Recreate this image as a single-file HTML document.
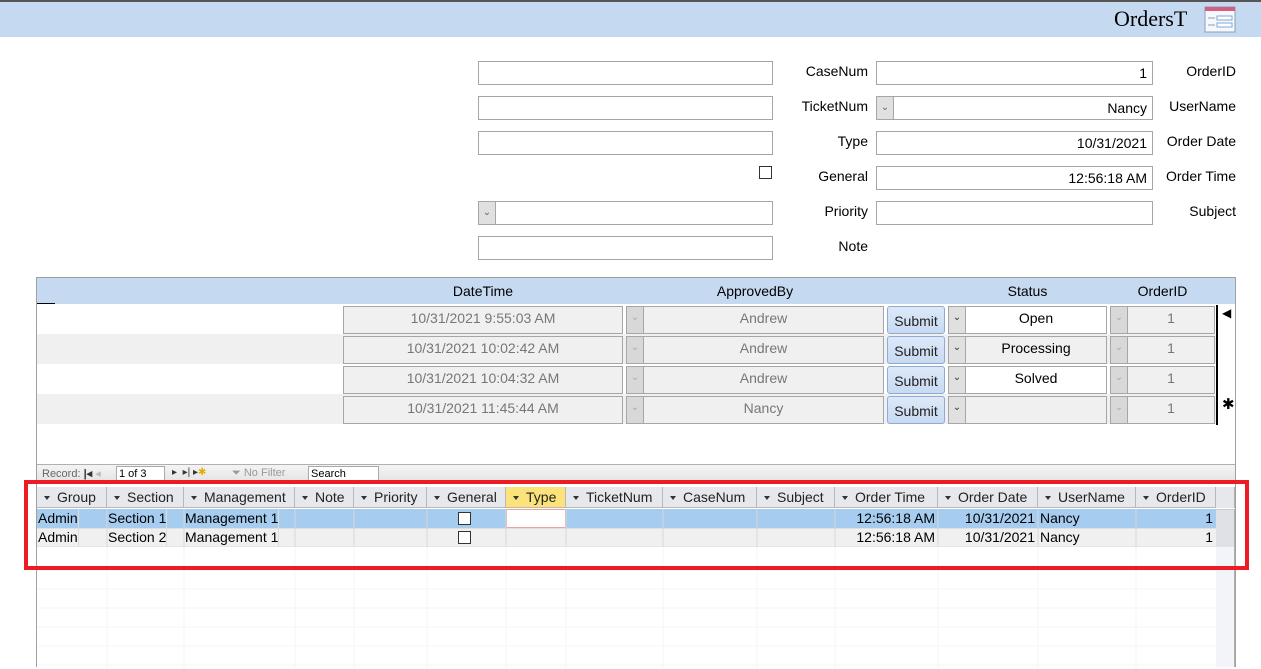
<!DOCTYPE html>
<html><head><meta charset="utf-8">
<style>
*{box-sizing:border-box;margin:0;padding:0}
body{width:1261px;height:662px;position:relative;overflow:hidden;background:#fff;font-family:"Liberation Sans",sans-serif;font-size:14px;color:#000}
.a{position:absolute}
.box{position:absolute;border:1px solid #a6a6a6;background:#fff;height:24px}
.lbl{position:absolute;font-size:14px;line-height:20px}
.dd{position:absolute;left:0;top:0;width:17px;height:100%;background:#e0e0e0;border-right:1px solid #a6a6a6;font-size:10px;color:#666;text-align:center;line-height:22px}
.gbox{position:absolute;border:1px solid #a6a6a6;background:#f0f0f0;height:28px;color:#777;text-align:center;line-height:22px;font-size:14px}
.sub{position:absolute;border:1px solid #8eaad6;border-radius:3px;background:linear-gradient(#dde9f8,#c7daf2);width:58px;height:28px;text-align:center;line-height:28px;font-size:14px;color:#222}
.hc{position:absolute;top:0;height:20px;line-height:20px;border-right:1px solid #b8b8b8;font-size:14px;color:#222;padding-left:20px;background:#e6e8ec}
.hc:before{content:"";position:absolute;left:7px;top:9px;border:3px solid transparent;border-top:4px solid #333}
.c{position:absolute;height:19px;line-height:19px;border-right:1px solid #ddd;font-size:14px;white-space:nowrap;overflow:hidden}
.cb{position:absolute;width:13px;height:13px;border:1px solid #333;background:#fff}
</style></head><body>
<div class="a" style="left:0;top:0;width:1261px;height:37px;background:#c5d9f1;border-top:2px solid #555"></div>
<div class="a" style="left:1114px;top:6px;font-family:'Liberation Serif',serif;font-size:22px">OrdersT</div>
<svg class="a" style="left:1204px;top:6px" width="33" height="28" viewBox="0 0 33 28">
<rect x="1" y="1" width="30" height="25" fill="#f6f8fb" stroke="#8aa0bb"/>
<rect x="1" y="1" width="30" height="4" fill="#d06080"/>
<line x1="4" y1="12" x2="11" y2="12" stroke="#8aa0bb"/><rect x="13" y="10" width="15" height="4" fill="#fff" stroke="#7fa7d8"/>
<line x1="4" y1="19" x2="11" y2="19" stroke="#8aa0bb"/><rect x="13" y="17" width="15" height="4" fill="#fff" stroke="#7fa7d8"/>
</svg>

<div class="box" style="left:478px;top:61px;width:295px"></div>
<div class="box" style="left:478px;top:96px;width:295px"></div>
<div class="box" style="left:478px;top:131px;width:295px"></div>
<div class="a" style="left:759px;top:166px;width:13px;height:13px;border:1px solid #333"></div>
<div class="box" style="left:478px;top:201px;width:295px"><div class="dd">&#8964;</div></div>
<div class="box" style="left:478px;top:236px;width:295px"></div>

<div class="lbl" style="left:780px;top:61px;width:88px;text-align:right">CaseNum</div>
<div class="lbl" style="left:780px;top:96px;width:88px;text-align:right">TicketNum</div>
<div class="lbl" style="left:780px;top:131px;width:88px;text-align:right">Type</div>
<div class="lbl" style="left:780px;top:166px;width:88px;text-align:right">General</div>
<div class="lbl" style="left:780px;top:201px;width:88px;text-align:right">Priority</div>
<div class="lbl" style="left:780px;top:236px;width:88px;text-align:right">Note</div>

<div class="box" style="left:876px;top:61px;width:277px;text-align:right;padding-right:5px;line-height:22px">1</div>
<div class="box" style="left:876px;top:96px;width:277px;text-align:right;padding-right:5px;line-height:22px"><div class="dd">&#8964;</div>Nancy</div>
<div class="box" style="left:876px;top:131px;width:277px;text-align:right;padding-right:5px;line-height:22px">10/31/2021</div>
<div class="box" style="left:876px;top:166px;width:277px;text-align:right;padding-right:5px;line-height:22px">12:56:18 AM</div>
<div class="box" style="left:876px;top:201px;width:277px"></div>

<div class="lbl" style="left:1150px;top:61px;width:86px;text-align:right">OrderID</div>
<div class="lbl" style="left:1150px;top:96px;width:86px;text-align:right">UserName</div>
<div class="lbl" style="left:1150px;top:131px;width:86px;text-align:right">Order Date</div>
<div class="lbl" style="left:1150px;top:166px;width:86px;text-align:right">Order Time</div>
<div class="lbl" style="left:1150px;top:201px;width:86px;text-align:right">Subject</div>

<div class="a" style="left:36px;top:277px;width:1200px;height:390px;border:1px solid #a0a0a0;border-bottom:none"></div>
<div class="a" style="left:37px;top:278px;width:1198px;height:26px;background:#c5d9f1"></div>
<div class="a" style="left:37px;top:303px;width:18px;height:1px;background:#000"></div>
<div class="lbl" style="left:343px;top:281px;width:280px;text-align:center">DateTime</div>
<div class="lbl" style="left:626px;top:281px;width:258px;text-align:center">ApprovedBy</div>
<div class="lbl" style="left:948px;top:281px;width:159px;text-align:center">Status</div>
<div class="lbl" style="left:1110px;top:281px;width:105px;text-align:center">OrderID</div>
<div class="a" style="left:37px;top:334px;width:1180px;height:30px;background:#f0f0f0"></div>
<div class="a" style="left:37px;top:394px;width:1180px;height:30px;background:#f0f0f0"></div>
<div class="a" style="left:1216px;top:305px;width:2px;height:120px;background:#000"></div>
<div class="a" style="left:1222px;top:306px;font-size:12px">&#9664;</div>
<div class="a" style="left:1222px;top:395px;font-size:15px">&#10033;</div>

<div class="gbox" style="left:343px;top:306px;width:280px">10/31/2021 9:55:03 AM</div>
<div class="gbox" style="left:343px;top:336px;width:280px">10/31/2021 10:02:42 AM</div>
<div class="gbox" style="left:343px;top:366px;width:280px">10/31/2021 10:04:32 AM</div>
<div class="gbox" style="left:343px;top:396px;width:280px">10/31/2021 11:45:44 AM</div>

<div class="gbox" style="left:626px;top:306px;width:258px;padding-left:17px"><div class="dd" style="background:#d8d8d8;color:#aaa;height:26px">&#8964;</div>Andrew</div>
<div class="gbox" style="left:626px;top:336px;width:258px;padding-left:17px"><div class="dd" style="background:#d8d8d8;color:#aaa;height:26px">&#8964;</div>Andrew</div>
<div class="gbox" style="left:626px;top:366px;width:258px;padding-left:17px"><div class="dd" style="background:#d8d8d8;color:#aaa;height:26px">&#8964;</div>Andrew</div>
<div class="gbox" style="left:626px;top:396px;width:258px;padding-left:17px"><div class="dd" style="background:#d8d8d8;color:#aaa;height:26px">&#8964;</div>Nancy</div>

<div class="sub" style="left:887px;top:306px">Submit</div>
<div class="sub" style="left:887px;top:336px">Submit</div>
<div class="sub" style="left:887px;top:366px">Submit</div>
<div class="sub" style="left:887px;top:396px">Submit</div>

<div class="gbox" style="left:948px;top:306px;width:159px;padding-left:17px;background:#fff;color:#000"><div class="dd" style="height:26px;color:#333">&#8964;</div>Open</div>
<div class="gbox" style="left:948px;top:336px;width:159px;padding-left:17px;color:#000"><div class="dd" style="height:26px;color:#333">&#8964;</div>Processing</div>
<div class="gbox" style="left:948px;top:366px;width:159px;padding-left:17px;background:#fff;color:#000"><div class="dd" style="height:26px;color:#333">&#8964;</div>Solved</div>
<div class="gbox" style="left:948px;top:396px;width:159px;padding-left:17px"><div class="dd" style="height:26px;color:#333">&#8964;</div></div>

<div class="gbox" style="left:1110px;top:306px;width:105px;padding-left:17px"><div class="dd" style="background:#d8d8d8;color:#aaa;height:26px">&#8964;</div>1</div>
<div class="gbox" style="left:1110px;top:336px;width:105px;padding-left:17px"><div class="dd" style="background:#d8d8d8;color:#aaa;height:26px">&#8964;</div>1</div>
<div class="gbox" style="left:1110px;top:366px;width:105px;padding-left:17px"><div class="dd" style="background:#d8d8d8;color:#aaa;height:26px">&#8964;</div>1</div>
<div class="gbox" style="left:1110px;top:396px;width:105px;padding-left:17px"><div class="dd" style="background:#d8d8d8;color:#aaa;height:26px">&#8964;</div>1</div>

<div class="a" style="left:37px;top:464px;width:1198px;height:18px;background:linear-gradient(#f4f4f4,#e4e4e4);border-top:1px solid #b0b0b0"></div>
<div class="a" style="left:42px;top:467px;font-size:11px;color:#666;white-space:nowrap">Record: <b style="color:#333">|◂</b> <span style="color:#bbb">◂</span></div>
<div class="a" style="left:116px;top:466px;width:49px;height:17px;border:1px solid #aaa;background:#fff;font-size:11px;padding-left:2px;line-height:15px">1 of 3</div>
<div class="a" style="left:172px;top:467px;font-size:10px;color:#333">▸ &nbsp;▸| ▸<span style="color:#e0b000">✱</span></div>
<div class="a" style="left:232px;top:467px;font-size:11px;color:#999">⏷ No Filter</div>
<div class="a" style="left:308px;top:466px;width:71px;height:17px;border:1px solid #aaa;background:#fff;font-size:11px;padding-left:2px;line-height:15px">Search</div>

<div class="a" style="left:37px;top:487px;width:1198px;height:180px;background:#fff">
 <div class="a" style="left:0;top:0;width:1198px;height:21px;background:#e6e8ec;border-bottom:1px solid #b8b8b8"></div>
 <div class="hc" style="left:0;width:70px">Group</div>
 <div class="hc" style="left:70px;width:77px">Section</div>
 <div class="hc" style="left:147px;width:111px">Management</div>
 <div class="hc" style="left:258px;width:59px">Note</div>
 <div class="hc" style="left:317px;width:73px">Priority</div>
 <div class="hc" style="left:390px;width:79px">General</div>
 <div class="hc" style="left:469px;width:60px;background:#fbe27a">Type</div>
 <div class="hc" style="left:529px;width:97px">TicketNum</div>
 <div class="hc" style="left:626px;width:94px">CaseNum</div>
 <div class="hc" style="left:720px;width:78px">Subject</div>
 <div class="hc" style="left:798px;width:103px">Order Time</div>
 <div class="hc" style="left:901px;width:100px">Order Date</div>
 <div class="hc" style="left:1001px;width:98px">UserName</div>
 <div class="hc" style="left:1099px;width:80px">OrderID</div>
 <div class="a" style="left:1179px;top:0;width:19px;height:21px;background:#e6e8ec;border-right:1px solid #b0b0b0"></div>
 <div class="a" style="left:0;top:22px;width:1179px;height:19px;background:#a6cdf0"></div>
 <div class="a" style="left:0;top:41px;width:1179px;height:19px;background:#f0f0f0;border-top:1px solid #e0e0e0;border-bottom:1px solid #e8e8e0"></div>
 <div class="a" style="left:1179px;top:22px;width:19px;height:38px;background:#dfe1e6;border-right:1px solid #b0b0b0;border-top:1px solid #ccc"></div>
 <div class="a" style="left:1179px;top:60px;width:19px;height:120px;background:#f3f4fa;border-right:1px solid #b0b0b0"></div>
 <div class="a" style="left:469px;top:22px;width:60px;height:19px;background:#fff;border:1px solid #f0a0a0"></div>
 <div class="c" style="left:1px;top:22px">Admin</div>
 <div class="c" style="left:71px;top:22px">Section 1</div>
 <div class="c" style="left:148px;top:22px">Management 1</div>
 <div class="cb" style="left:421px;top:25px"></div>
 <div class="c" style="left:798px;top:22px;width:100px;text-align:right;border:none">12:56:18 AM</div>
 <div class="c" style="left:901px;top:22px;width:97px;text-align:right;border:none">10/31/2021</div>
 <div class="c" style="left:1003px;top:22px;border:none">Nancy</div>
 <div class="c" style="left:1099px;top:22px;width:77px;text-align:right;border:none">1</div>
 <div class="c" style="left:1px;top:41px">Admin</div>
 <div class="c" style="left:71px;top:41px">Section 2</div>
 <div class="c" style="left:148px;top:41px">Management 1</div>
 <div class="cb" style="left:421px;top:44px"></div>
 <div class="c" style="left:798px;top:41px;width:100px;text-align:right;border:none">12:56:18 AM</div>
 <div class="c" style="left:901px;top:41px;width:97px;text-align:right;border:none">10/31/2021</div>
 <div class="c" style="left:1003px;top:41px;border:none">Nancy</div>
 <div class="c" style="left:1099px;top:41px;width:77px;text-align:right;border:none">1</div>
 <svg class="a" style="left:0;top:22px" width="1179" height="160">
  <g stroke="#d8d8d8"><path d="M70 0V38M147 0V38M258 0V38M317 0V38M390 0V38M469 0V38M529 0V38M626 0V38M720 0V38M798 0V38M901 0V38M1001 0V38M1099 0V38"/></g>
  <g stroke="#f5f5ef"><path d="M70 38V160M147 38V160M258 38V160M317 38V160M390 38V160M469 38V160M529 38V160M626 38V160M720 38V160M798 38V160M901 38V160M1001 38V160M1099 38V160M0 61H1179M0 80H1179M0 99H1179M0 118H1179M0 137H1179M0 156H1179"/></g>
 </svg>
</div>

<div class="a" style="left:24px;top:480px;width:1225px;height:90px;border:4px solid #ed1c24"></div>
</body></html>
